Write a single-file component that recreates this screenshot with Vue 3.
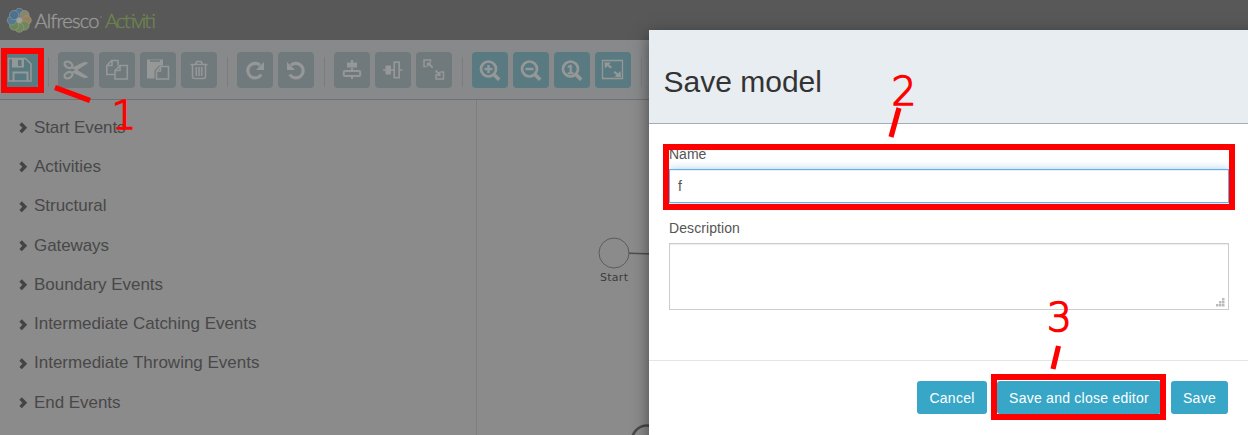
<script setup>
const groups = [
  ['save'],
  ['cut', 'copy', 'paste', 'trash'],
  ['redo', 'undo'],
  ['alignV', 'alignH', 'sameSize'],
  ['zoomIn', 'zoomOut', 'zoomActual', 'zoomFit'],
]
const active = new Set(['save', 'zoomIn', 'zoomOut', 'zoomActual', 'zoomFit'])
const sections = [
  ['Start Events', 91.5],
  ['Activities', 67],
  ['Structural', 72.5],
  ['Gateways', 75],
  ['Boundary Events', 129],
  ['Intermediate Catching Events', 222.5],
  ['Intermediate Throwing Events', 225.5],
  ['End Events', 86.5],
]
const petals = ['#4c7191', '#8a8468', '#9a8057', '#71875a', '#71875a', '#6a8653', '#527a90', '#4c7191']
</script>

<template>
  <div class="page">
    <header class="topbar">
      <svg class="logo" width="170" height="40" viewBox="0 0 170 40">
        <g stroke="#939c98" stroke-width=".6">
          <circle
            v-for="(c, i) in petals" :key="i" cx="19.3" cy="12.900" r="4.600" :fill="c"
            :transform="`rotate(${i * 45} 19.3 20.3)`"
          />
        </g>
        <circle cx="19.300" cy="20.300" r="2.800" fill="#9ea29c" />
        <text x="34.500" y="28" textLength="65" fill="#999" stroke="#999">Alfresco</text>
        <circle cx="101" cy="17" r=".7" fill="#888" />
        <text x="105" y="28" textLength="51" fill="#6d844e" stroke="#6d844e">Activiti</text>
      </svg>
    </header>

    <nav class="toolbar">
      <div v-for="(g, gi) in groups" :key="gi" class="group">
        <button v-for="name in g" :key="name" class="tool" :class="{ on: active.has(name) }">
          <svg width="36" height="36" viewBox="0 0 36 36" fill="none" stroke="#969898" stroke-width="2">
            <g v-if="name === 'save'">
              <path d="M6.500 6.500h17l5.500 5.500v17h-22.500z" stroke-width="1.600" />
              <path d="M10 6h12v9.500h-12z" fill="#969898" stroke="none" />
              <path d="M16 8h3.500v6h-3.500z" fill="#5a7a82" stroke="none" />
              <path d="M11.500 29v-8.500h14v8.500" />
            </g>
            <g v-else-if="name === 'cut'" stroke-width="2.200">
              <ellipse cx="10.500" cy="12.800" rx="4.200" ry="2.900" transform="rotate(28 10.500 12.800)" />
              <ellipse cx="10.500" cy="23.200" rx="4.200" ry="2.900" transform="rotate(-28 10.500 23.200)" />
              <path d="M13.500 15.500l5 2.500 11-7-3-.8-10 4.800zM13.500 20.500l5-2.500 11 7-3 .8-10-4.800z" fill="#969898" stroke-width="1" />
            </g>
            <g v-else-if="name === 'copy'" stroke-width="1.600">
              <path d="M15 22.500H7.800v-9L12.500 8.500H19v5M13 8.500v5h-5" />
              <path d="M21 13.500h7.300v13.500h-12.300v-8.500zM21 13.500v5h-5" />
            </g>
            <g v-else-if="name === 'paste'">
              <path d="M7 7.500h16v6h-4l-4.500 5v8H7z" fill="#969898" stroke="none" />
              <path d="M10 9h10" stroke="#70797b" stroke-width="1.500" />
              <path d="M20.500 14.500h8v12.500h-12v-8zM20.500 14.500v4.500h-4" stroke-width="1.600" />
            </g>
            <g v-else-if="name === 'trash'" stroke-width="1.600">
              <path d="M9.500 12.500h17M14.500 12l1.500-2.500h4l1.500 2.500M11.500 13v11.500q0 2 2 2h9q2 0 2-2V13M15.300 15v9M18 15v9M20.700 15v9" />
            </g>
            <g v-else-if="name === 'redo' || name === 'undo'" :transform="name === 'undo' ? 'translate(36 0) scale(-1 1)' : undefined">
              <path d="M24.300 22.500A7.300 7.300 0 1 1 23 13.200" stroke-width="3.200" />
              <path d="M27 10v8h-8z" fill="#969898" stroke="none" />
            </g>
            <g v-else-if="name === 'alignV'">
              <path d="M18 8v3M18 16v3M18 24v3" />
              <path d="M13 10.500h10v5h-10z" fill="#969898" stroke="none" />
              <rect x="9.800" y="19" width="16.400" height="5" rx="1" />
            </g>
            <g v-else-if="name === 'alignH'">
              <path d="M8 18h3M16 18h3M24 18h3.500" stroke-width="1.500" />
              <path d="M10.500 13.500h5.500v9h-5.500z" fill="#969898" stroke="none" />
              <rect x="19.200" y="10.200" width="5" height="15.500" stroke-width="1.700" />
            </g>
            <g v-else-if="name === 'sameSize'" stroke-width="1.500">
              <path d="M14.500 10V8H8v6.500h2.500M20.500 20h-1M20 22v5h7.500v-7h-3" />
              <path d="M11 10.500h4.500l-1.300 1.300 3 3.200-1.200 1.200-3.200-3-1.800 1.800zM24.500 24.500v-5.500l-1.500 1.500-2.500-2.500-1.300 1.300 2.500 2.500-1.700 1.700z" fill="#969898" stroke="none" />
            </g>
            <g v-else-if="name === 'zoomFit'">
              <path d="M7.500 8.500h20v18h-20z" stroke-width="1.300" />
              <path d="M9.500 10.500h6.500l-2 2 3 2.500-1.500 1.500-3-2.500-2.500 2.500zM26 25h-6.500l2-2-3-2.500 1.500-1.500 3 2.500 2.500-2.500z" fill="#969898" stroke="none" />
            </g>
            <g v-else>
              <circle cx="16.500" cy="17" r="7.500" stroke-width="2.700" />
              <path d="M22 22.500l5.200 5.200" stroke-width="3.600" />
              <path v-if="name !== 'zoomActual'" d="M12.500 17h8" stroke-width="2.400" />
              <path v-if="name === 'zoomIn'" d="M16.500 13v8" stroke-width="2.400" />
              <text v-if="name === 'zoomActual'" class="one" x="13" y="21.500">1</text>
            </g>
          </svg>
        </button>
      </div>
    </nav>

    <div class="workspace">
      <aside class="palette">
        <div v-for="[label, width] in sections" :key="label" class="section">
          <svg class="chev" width="9" height="12" viewBox="0 0 9 12"><path d="M1.600 1.500L5.800 5.800 1.600 10.100" fill="none" stroke="#444" stroke-width="3.400" /></svg>
          <svg class="label" width="240" height="24"><text x="0" y="17" :textLength="width" fill="#484848">{{ label }}</text></svg>
        </div>
      </aside>
      <svg class="canvas" width="771" height="335" viewBox="477 100 771 335" fill="none" stroke="#5c5c5c">
        <circle cx="614" cy="253" r="15" />
        <path d="M629 253.300l25 .7" stroke="#4e4e4e" stroke-width="1.500" />
        <text class="node" x="600" y="281" textLength="28">Start</text>
        <circle cx="647" cy="440.500" r="15" stroke-width="2.700" stroke="#4a4a4a" />
      </svg>
    </div>

    <section class="modal">
      <div class="head"><h2>Save model</h2></div>
      <div class="body">
        <label>Name</label>
        <div class="input">f</div>
        <label class="second">Description</label>
        <div class="area">
          <svg width="9" height="9" fill="#bbb"><path d="M6 0h2.500v2.500h-2.500zM3 3h2.500v2.500h-2.500zM6 3h2.500v2.500h-2.500zM0 6h2.500v2.500h-2.500zM3 6h2.500v2.500h-2.500zM6 6h2.500v2.500h-2.500z" /></svg>
        </div>
      </div>
      <div class="foot">
        <button>Cancel</button>
        <button class="wide">Save and close editor</button>
        <button class="small">Save</button>
      </div>
    </section>

    <svg class="marks" width="1248" height="435" fill="none" stroke="#f00">
      <g stroke-width="6">
        <rect x="4" y="51" width="37" height="39" />
        <rect x="666" y="147" width="566" height="60" />
        <rect x="994" y="377" width="169" height="40" />
      </g>
      <path d="M55 87.500L90 100.500M899 108L891 137M1058.500 346L1053 369" stroke-width="5.200" />
      <g class="digits" fill="#f00" stroke-width="1.500">
        <text x="111.500" y="128.500">1</text>
        <text x="891.500" y="104.500">2</text>
        <text x="1047" y="331">3</text>
      </g>
    </svg>
  </div>
</template>

<style>
body { margin: 0; overflow: hidden; }
</style>

<style scoped>
.page { position: relative; width: 1248px; height: 435px; overflow: hidden; background: #8b8b8b; font-family: "Liberation Sans", Arial, sans-serif; }
.topbar { height: 40px; background: #585858; }
.logo { display: block; }
.logo text { font: 300 20px Lato, sans-serif; stroke-width: .4px; }
.toolbar { display: flex; box-sizing: border-box; height: 60px; padding: 12px 0 0 2px; background: #87898b; border-bottom: 1px solid #6e7275; }
.group { display: flex; gap: 5px; height: 36px; padding-right: 20px; position: relative; }
.group::after { content: ""; position: absolute; right: 9px; top: 5px; width: 1px; height: 30px; background: #7b7e80; }
.tool { width: 36px; height: 36px; padding: 0; border: 0; border-radius: 4px; background: #70797b; }
.tool.on { background: #5a7a82; }
.tool svg { display: block; }
.one { font: bold 12px "Liberation Sans", sans-serif; fill: #969898; stroke: #969898; stroke-width: .5px; }
.workspace { display: flex; height: 335px; }
.palette { box-sizing: border-box; width: 477px; padding: 8px 0 0 19px; border-right: 1px solid #7b7d7f; }
.section { display: flex; align-items: center; height: 39.300px; }
.chev { margin-right: 6px; margin-top: 1px; }
.label { font-size: 17px; }
.canvas { display: block; }
.node { font: 11px "DejaVu Sans", sans-serif; fill: #3c3c3c; stroke: none; }
.modal { position: absolute; left: 649px; top: 30px; width: 620px; height: 430px; background: #fff; box-shadow: 0 5px 15px rgba(0, 0, 0, .5); }
.head { box-sizing: border-box; height: 94px; padding: 34px 14.500px 0; background: #e8edf1; border-bottom: 1px solid #a5abba; }
h2 { margin: 0; font-size: 30px; line-height: 35px; font-weight: 400; color: #333; }
.body { box-sizing: border-box; height: 236px; padding: 20px; }
label { display: block; height: 25px; line-height: 20px; font-size: 14px; color: #555; }
.second { margin-top: 15px; letter-spacing: .08px; }
.input { box-sizing: border-box; width: 560px; height: 34px; padding: 0 8px; line-height: 33px; font-size: 14px; color: #555; border: 1px solid #66afe9; box-shadow: inset 0 1px 1px rgba(0, 0, 0, .075), 0 0 8px rgba(102, 175, 233, .6); }
.area { box-sizing: border-box; display: flex; align-items: flex-end; justify-content: flex-end; width: 560px; height: 67px; padding: 2px 3px; border: 1px solid #ccc; box-shadow: inset 0 1px 1px rgba(0, 0, 0, .075); }
.foot { display: flex; gap: 10px; padding: 20px 0 0 268px; border-top: 1px solid #e5e5e5; }
.foot button { width: 70px; height: 33px; padding: 0; border: 0; border-radius: 3px; background: #38a7c7; color: #fff; font: 14px "Liberation Sans", Arial, sans-serif; letter-spacing: .25px; }
.foot .wide { width: 164px; }
.foot .small { width: 57px; }
.marks { position: absolute; left: 0; top: 0; }
.digits { font: 200 39px "DejaVu Sans Light", "DejaVu Sans", sans-serif; }
</style>
